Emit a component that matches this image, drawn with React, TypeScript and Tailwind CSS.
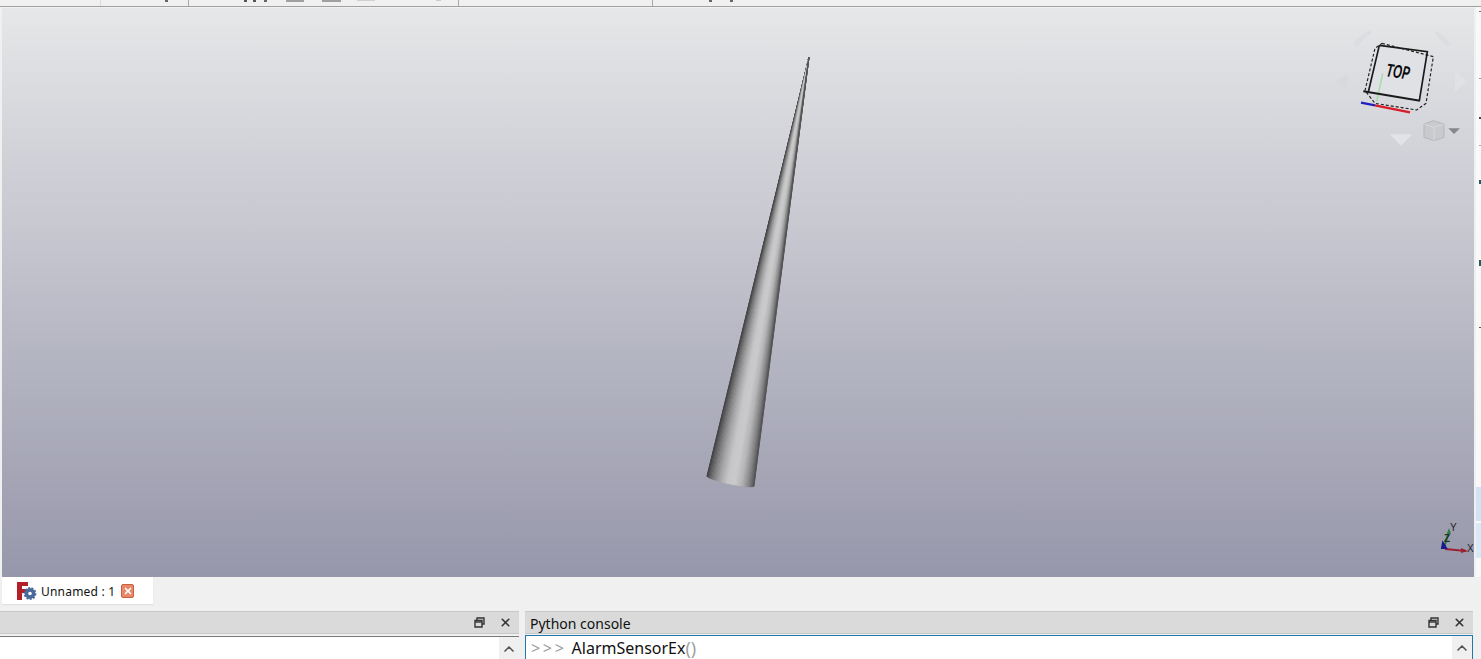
import { ChevronUp, X } from 'lucide-react'

const coneStops: [number, number][] = [
  [0, 62],
  [0.06, 88],
  [0.16, 128],
  [0.3, 170],
  [0.45, 200],
  [0.6, 204],
  [0.75, 182],
  [0.88, 138],
  [1, 84],
]

function coneShade(t: number) {
  for (let i = 1; i < coneStops.length; i++) {
    const [t0, v0] = coneStops[i - 1]
    const [t1, v1] = coneStops[i]
    if (t <= t1) {
      const v = Math.round(v0 + ((t - t0) / (t1 - t0)) * (v1 - v0))
      return `rgb(${v},${v},${v + 1})`
    }
  }
  return 'rgb(84,84,85)'
}

function Cone() {
  // fan of facets from the tip down to the base ellipse, in page coordinates
  const tip = { x: 809, y: 57 }
  const a = { x: 707, y: 476 }
  const b = { x: 754, y: 486 }
  const count = 40
  const pts = Array.from({ length: count + 1 }, (_, i) => {
    const ang = Math.PI - (i / count) * Math.PI
    const u = (1 - Math.cos(Math.PI - ang)) / 2
    const sag = Math.sin(ang) * 3
    return { x: a.x + (b.x - a.x) * u - sag * 0.2, y: a.y + (b.y - a.y) * u + sag, u }
  })
  return (
    <svg className="absolute left-0 top-0" width="1472" height="569" viewBox="2 8 1472 569">
      {pts.slice(0, -1).map((p, i) => {
        const q = pts[i + 1]
        const c = coneShade((p.u + q.u) / 2)
        return (
          <polygon
            key={i}
            points={`${tip.x},${tip.y} ${p.x},${p.y} ${q.x},${q.y}`}
            fill={c}
            stroke={c}
            strokeWidth="0.45"
          />
        )
      })}
    </svg>
  )
}

function NavCube() {
  return (
    <svg className="absolute right-0 top-0" width="154" height="160" viewBox="1320 8 154 160">
      <g transform="translate(1320 0) scale(0.33333)">
        <path d="M98 132 Q120 105 150 90 L155 100 Q130 115 112 142 Z" fill="#dcdde1" />
        <path d="M350 92 Q375 108 392 130 L380 142 Q365 120 345 102 Z" fill="#dcdde1" />
        <path d="M82 222 L48 245 L82 270 Z" fill="#d8d9dd" />
        <path d="M405 210 L440 243 L405 276 Z" fill="#e0e1e4" />
        <path d="M210 403 L277 403 L243 437 Z" fill="#e2e3e6" />
        <path d="M178 136 L322 155 L298 302 L145 276 Z" fill="#e0e1e5" />
        <path d="M188 220 L170 305" stroke="#a8dcae" strokeWidth="5" fill="none" />
        <path d="M186 130 L340 170 L318 310 L290 330 L165 310 L135 272 L165 145 Z" fill="none" stroke="#222" strokeWidth="3.5" strokeDasharray="9 6" />
        <path d="M178 136 L322 155 L298 302 M178 136 L145 276" fill="none" stroke="#1a1a1a" strokeWidth="5" />
        <path d="M130 274 L300 302" fill="none" stroke="#1a1a1a" strokeWidth="6" />
        <path d="M123 308 L165 316" stroke="#2020c0" strokeWidth="7" />
        <path d="M165 316 L270 337" stroke="#d81c28" strokeWidth="7" />
        <text
          x="234"
          y="234"
          transform="rotate(8 234 216)"
          textAnchor="middle"
          fontFamily="'Liberation Sans', sans-serif"
          fontSize="56"
          fontWeight="700"
          fontStyle="italic"
          textLength="70"
          lengthAdjust="spacingAndGlyphs"
          fill="#0a0a0a"
        >
          TOP
        </text>
        <path d="M312 372 L340 362 L372 372 L372 412 L342 422 L312 412 Z" fill="#c9cacd" stroke="#a9aaad" strokeWidth="2" />
        <path d="M312 372 L342 382 L372 372 M342 382 L342 422" fill="none" stroke="#dedfe1" strokeWidth="2" />
        <path d="M385 385 L420 385 L402 402 Z" fill="#85868a" />
      </g>
    </svg>
  )
}

function Axes() {
  return (
    <svg className="absolute right-0 bottom-0" width="60" height="70" viewBox="1414 507 60 70">
      <path d="M1444 548 L1449 531" stroke="#2f7a3a" strokeWidth="2" />
      <path d="M1449 528 L1447 534 L1451 534 Z" fill="#2f7a3a" />
      <path d="M1445 549 L1466 551" stroke="#9c2233" strokeWidth="2" />
      <path d="M1468 551 L1461 548 L1461 553 Z" fill="#9c2233" />
      <path d="M1443 543 L1446 548 L1442 548 Z" fill="#1a1a90" stroke="#1a1a90" strokeWidth="2" />
      <text x="1450" y="531" fontSize="10" fontFamily="'Liberation Sans', sans-serif" fill="#222">Y</text>
      <text x="1444" y="542" fontSize="10" fontWeight="700" fontFamily="'Liberation Sans', sans-serif" fill="#1d3a22">Z</text>
      <text x="1467" y="552" fontSize="10" fontFamily="'Liberation Sans', sans-serif" fill="#222">X</text>
    </svg>
  )
}

function TabIcon() {
  return (
    <svg width="22" height="22" viewBox="0 0 22 22" className="shrink-0">
      <path d="M1 2 H12 V6 H6 V9 H10 V13 H6 V20 H1 Z" fill="#b3202a" />
      <circle cx="14" cy="13.5" r="3.6" fill="none" stroke="#4a6a9c" strokeWidth="3.6" />
      <circle cx="14" cy="13.5" r="5.6" fill="none" stroke="#4a6a9c" strokeWidth="1.6" strokeDasharray="2 1.4" />
    </svg>
  )
}

function RestoreIcon() {
  return (
    <svg width="11" height="11" viewBox="0 0 11 11" fill="none" stroke="#333" strokeWidth="1.4">
      <path d="M3 3 V1 H10 V7 H8" />
      <path d="M1 3.5 H8 V10 H1 Z" />
      <path d="M1 5 H8" />
    </svg>
  )
}

function PanelButtons() {
  return (
    <div className="ml-auto flex items-center gap-[14px] pr-[7px]">
      <RestoreIcon />
      <X size={13} strokeWidth={3} className="text-[#333]" />
    </div>
  )
}

function ScrollUp() {
  return (
    <div className="ml-auto flex h-full w-[20px] justify-center bg-[#f0f0f0] pt-[4px]">
      <ChevronUp size={16} strokeWidth={2.5} className="text-[#555]" />
    </div>
  )
}

function Toolbar() {
  return (
    <div className="flex h-[7px] items-start border-b border-[#a0a0a0] bg-[#f0f0f0]">
      <div className="ml-[100px] h-[6px] w-px bg-[#dcdcdc]" />
      <div className="ml-[64px] h-[2px] w-[3px] bg-[#666]" />
      <div className="ml-[20px] h-[6px] w-px bg-[#a8a8a8]" />
      <div className="ml-[55px] h-[2px] w-[3px] bg-[#555]" />
      <div className="ml-[6px] h-[2px] w-[3px] bg-[#555]" />
      <div className="ml-[8px] h-[2px] w-[3px] bg-[#666]" />
      <div className="ml-[19px] h-[2px] w-[18px] bg-[#a0a0a0]" />
      <div className="ml-[18px] h-[2px] w-[19px] bg-[#a0a0a0]" />
      <div className="ml-[16px] h-[1px] w-[18px] bg-[#d0d0d0]" />
      <div className="ml-[61px] h-[1px] w-[5px] bg-[#cccccc]" />
      <div className="ml-[17px] h-[6px] w-px bg-[#a8a8a8]" />
      <div className="ml-[193px] h-[6px] w-px bg-[#a8a8a8]" />
      <div className="ml-[56px] h-[2px] w-[3px] bg-[#666]" />
      <div className="ml-[18px] h-[2px] w-[3px] bg-[#666]" />
    </div>
  )
}

function SideStrip() {
  return (
    <div className="flex w-[5px] flex-col items-end bg-[#f9f9f9]">
      <div className="mt-[4px] h-px w-[2px] bg-[#777]" />
      <div className="mt-[66px] h-px w-[2px] bg-[#999]" />
      <div className="mt-[38px] h-[2px] w-[2px] bg-[#444]" />
      <div className="mt-[26px] h-px w-[2px] bg-[#aaa]" />
      <div className="mt-[34px] h-[4px] w-[2px] bg-[#1f5f5f]" />
      <div className="mt-[76px] h-[6px] w-[2px] bg-[#1f5f5f]" />
      <div className="mt-[61px] h-px w-[2px] bg-[#555]" />
      <div className="mt-[159px] h-[34px] w-full bg-[#cfe4f7]" />
      <div className="mt-[2px] h-[35px] w-full bg-[#d8e9f8]" />
    </div>
  )
}

export default function App() {
  return (
    <div className="flex h-[659px] w-[1481px] flex-col overflow-hidden bg-[#f0f0f0] font-['Noto_Sans',sans-serif] text-[#111]">
      <Toolbar />
      <div className="flex h-[570px] pl-[2px]">
        <div className="relative mt-px w-[1472px] bg-gradient-to-b from-[#e6e7e8] to-[#9797ab]">
          <Cone />
          <NavCube />
          <Axes />
        </div>
        <div className="ml-[2px] flex">
          <SideStrip />
        </div>
      </div>
      <div className="h-[34px] pl-[2px]">
        <div className="flex h-[27px] w-[151px] items-center bg-white pl-[14px] shadow-[0_1px_1px_#e0e0e0]">
          <TabIcon />
          <span className="ml-[3px] pt-[2px] text-[12px] tracking-[0.2px] whitespace-nowrap">Unnamed : 1</span>
          <div className="ml-[6px] flex h-[14px] w-[13px] items-center justify-center rounded-[2px] border border-[#c9603f] bg-[#e8876a]">
            <X size={10} strokeWidth={4} className="text-white" />
          </div>
        </div>
      </div>
      <div className="flex h-[48px] w-[1473px] gap-[6px]">
        <div className="flex w-[519px] flex-col">
          <div className="flex h-[23px] items-center border-y border-[#c8c8c8] bg-[#dadada]">
            <PanelButtons />
          </div>
          <div className="h-[2px]" />
          <div className="flex min-h-0 flex-1 border-t border-[#7a7a7a] bg-white">
            <ScrollUp />
          </div>
        </div>
        <div className="flex flex-1 flex-col">
          <div className="flex h-[23px] items-center border-y border-[#c8c8c8] bg-[#dadada] pl-[5px]">
            <span className="pt-[2px] text-[14px] leading-none whitespace-nowrap">Python console</span>
            <PanelButtons />
          </div>
          <div className="h-px" />
          <div className="flex min-h-0 flex-1 items-start border border-b-0 border-[#1f78b0] bg-white pl-[5px]">
            <div className="flex h-full items-center pt-px text-[16px] leading-none whitespace-nowrap">
              <span className="tracking-[2.7px] text-[#a0a0a0]">&gt;&gt;&gt;</span>
              <span className="ml-[5px]">AlarmSensorEx</span>
              <span className="text-[18px] text-[#a0a0a0]">()</span>
            </div>
            <ScrollUp />
          </div>
        </div>
      </div>
    </div>
  )
}
